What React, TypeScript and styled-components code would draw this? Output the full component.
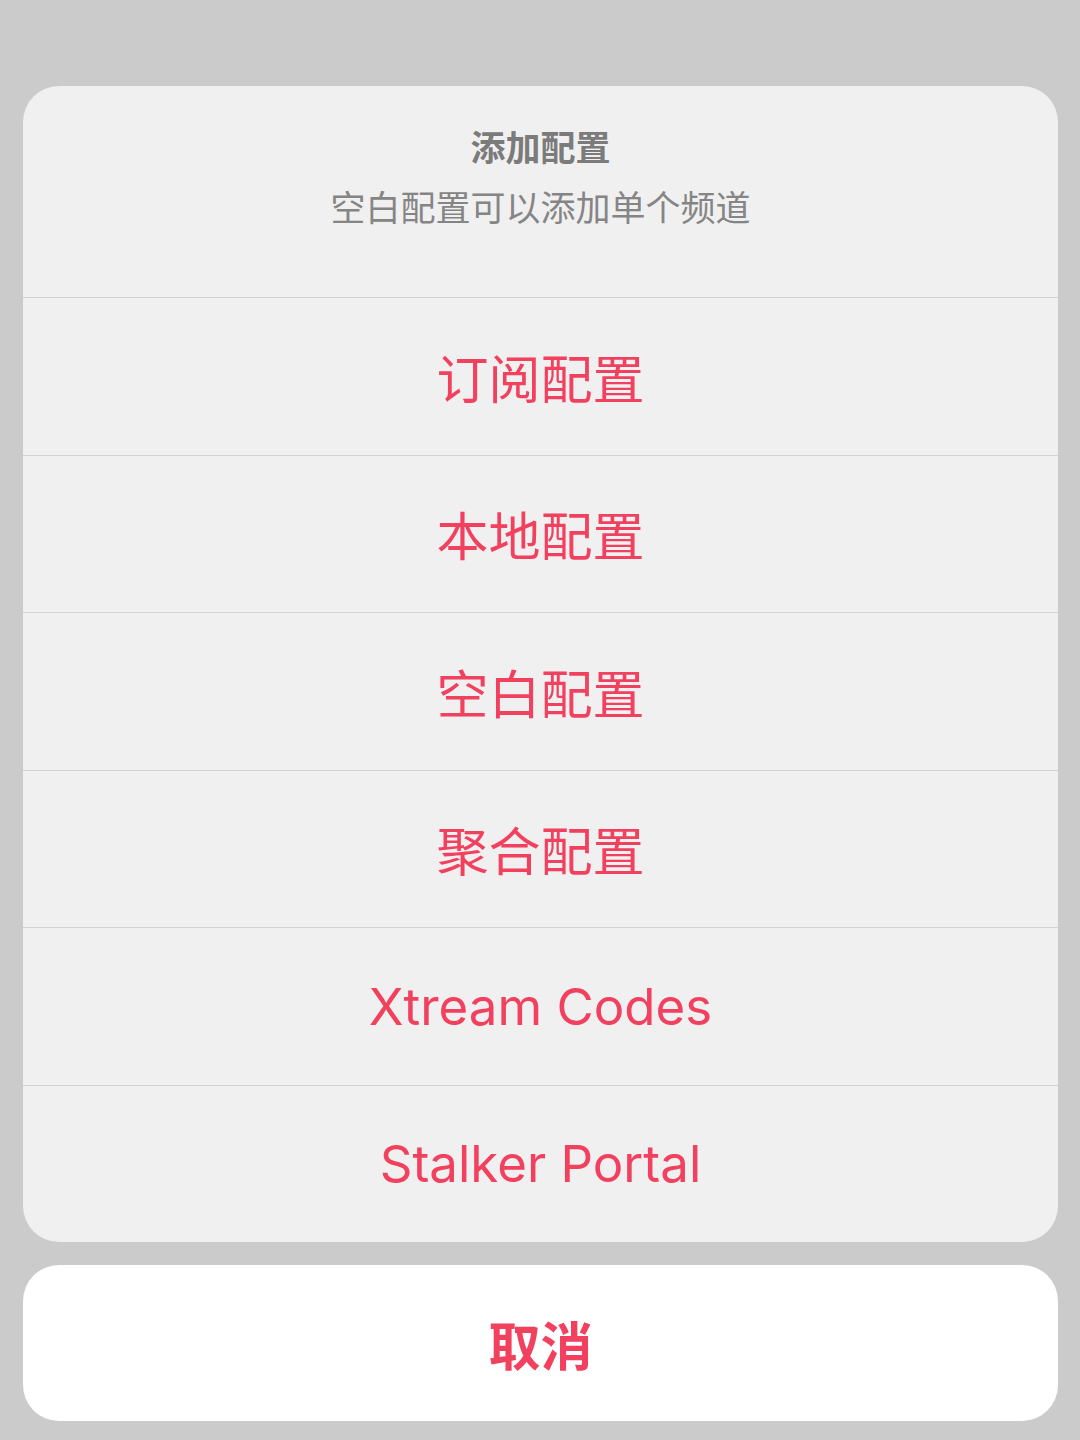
import React from 'react';
import styled, { createGlobalStyle } from 'styled-components';

const GlobalStyle = createGlobalStyle`
    html, body {
        margin: 0;
        padding: 0;
        background: #cbcbcb;
    }
    body {
        font-family: Inter, "Noto Sans CJK SC", "Noto Sans", sans-serif;
        -webkit-font-smoothing: antialiased;
    }
`;

const Screen = styled.div`
    box-sizing: border-box;
    width: 1080px;
    height: 1440px;
    padding: 86px 22px 0 23px;
    display: flex;
    flex-direction: column;
    gap: 23px;
    background: #cbcbcb;
`;

const Sheet = styled.div`
    display: flex;
    flex-direction: column;
    background: #f0f0f0;
    border-radius: 36px;
    overflow: hidden;
`;

const Header = styled.div`
    box-sizing: border-box;
    height: 211px;
    padding-top: 38px;
    display: flex;
    flex-direction: column;
    align-items: center;
    gap: 16px;
`;

const Title = styled.div`
    font-family: "Noto Sans CJK SC", sans-serif;
    font-size: 35px;
    font-weight: 600;
    line-height: 44px;
    color: #7b7b7b;
`;

const Message = styled.div`
    font-family: "Noto Sans CJK SC", sans-serif;
    font-size: 35px;
    font-weight: 400;
    line-height: 44px;
    color: #858585;
`;

const Action = styled.button<{ $latin?: boolean }>`
    box-sizing: border-box;
    height: 157.5px;
    width: 100%;
    margin: 0;
    padding: 0;
    border: none;
    border-top: 1px solid #d3d3d3;
    background: transparent;
    display: flex;
    align-items: center;
    justify-content: center;
    font-family: Inter, "Noto Sans CJK SC", sans-serif;
    font-size: ${(p) => (p.$latin ? '51px' : '52px')};
    font-weight: 400;
    color: #f2405f;
    cursor: pointer;
`;

const Cancel = styled(Action)`
    height: 156px;
    border-top: none;
    border-radius: 36px;
    background: #ffffff;
    font-family: "Noto Sans CJK SC", sans-serif;
    font-size: 52px;
    font-weight: 700;
`;

const actions = ['订阅配置', '本地配置', '空白配置', '聚合配置', 'Xtream Codes', 'Stalker Portal'];

export default function App() {
    return (
        <>
            <GlobalStyle />
            <Screen>
                <Sheet>
                    <Header>
                        <Title>添加配置</Title>
                        <Message>空白配置可以添加单个频道</Message>
                    </Header>
                    {actions.map((label) => (
                        <Action key={label} $latin={/^[A-Za-z]/.test(label)}>
                            {label}
                        </Action>
                    ))}
                </Sheet>
                <Cancel>取消</Cancel>
            </Screen>
        </>
    );
}
